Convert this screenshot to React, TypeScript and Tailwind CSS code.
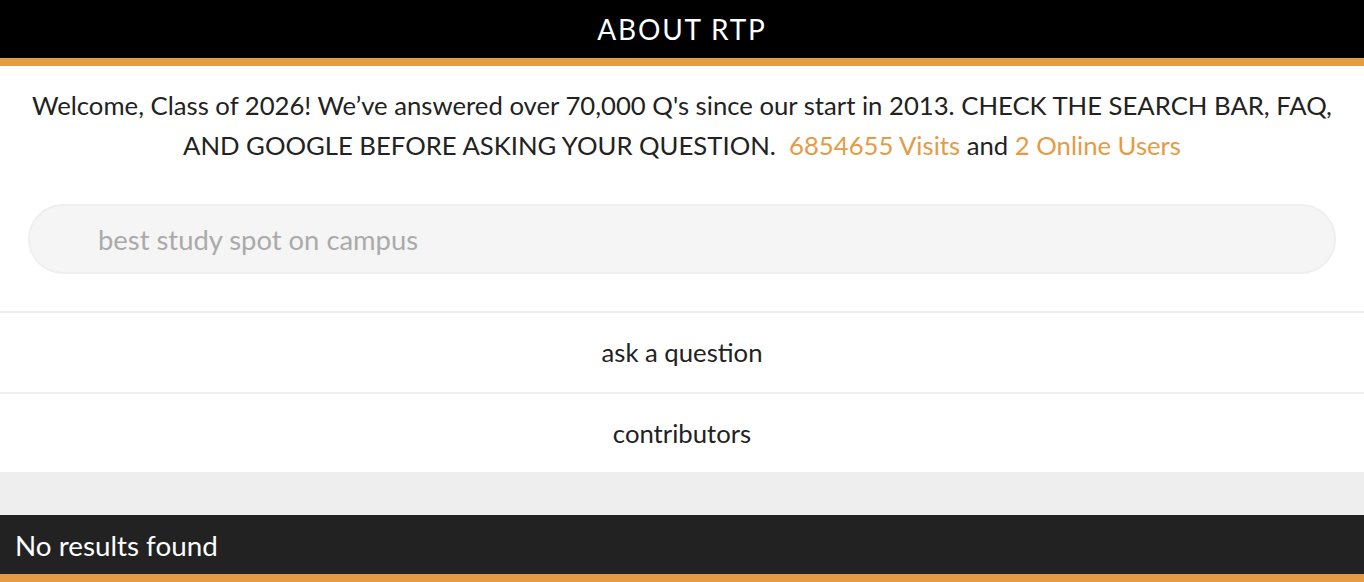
import React from 'react';

const orange = 'text-[#e59b45]';

export default function App() {
  return (
    <div className="min-h-screen bg-white font-['Lato','Open_Sans',sans-serif] text-[#222]">
      <header className="h-[66px] bg-black border-b-8 border-[#e59b45] flex items-center justify-center">
        <h1 className="text-white text-[28px] tracking-[1.8px] leading-none">ABOUT RTP</h1>
      </header>

      <p className="pt-[19px] px-6 text-center text-[25.7px] leading-[40px]">
        Welcome, Class of 2026! We’ve answered over 70,000 Q's since our start in 2013. CHECK THE SEARCH BAR, FAQ,
        AND GOOGLE BEFORE ASKING YOUR QUESTION.&nbsp; <span className={orange}>6854655 Visits</span> and{' '}
        <span className={orange}>2 Online Users</span>
      </p>

      <div className="px-[28px] pt-[39px] pb-[37px]">
        <input
          type="text"
          placeholder="best study spot on campus"
          className="w-full h-[70px] rounded-full bg-[#f5f5f5] border-2 border-[#efefef] pl-[68px] text-[27.4px] placeholder:text-[#aaa] outline-none"
        />
      </div>

      <nav className="flex flex-col">
        <a href="#" className="h-[81px] border-t-2 border-[#eee] flex items-center justify-center text-[25.7px]">
          ask a question
        </a>
        <a href="#" className="h-[80px] border-t-2 border-[#eee] flex items-center justify-center text-[25.7px]">
          contributors
        </a>
      </nav>

      <div className="h-[43px] bg-[#eee]" />

      <div className="h-[67px] bg-[#222] border-b-8 border-[#e59b45] flex items-center px-[15px]">
        <span className="text-white text-[27.8px] pt-[3px]">No results found</span>
      </div>
    </div>
  );
}
